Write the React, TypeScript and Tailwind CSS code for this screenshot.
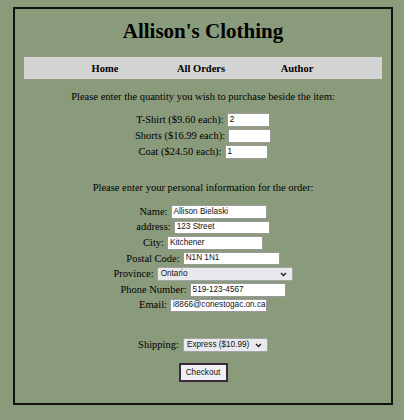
import { ReactNode } from "react";

const serif = { fontFamily: '"Liberation Serif", "Times New Roman", serif' };

function Field({ label, value, w }: { label: string; value: string; w: string }) {
    return (
        <div className="flex h-[15.6px] items-center justify-center gap-[3px]">
            <span className="leading-[12px]">{label}</span>
            <div className={`${w} h-[13.5px] bg-white border border-[#9a9a9a] px-[2px] flex items-center text-[8.2px] text-[#111] font-['Liberation_Sans',Arial,sans-serif] whitespace-nowrap overflow-hidden`}>{value}</div>
        </div>
    )
}

function Select({ value, w }: { value: string; w: string }) {
    return (
        <div className={`${w} h-[13.5px] bg-[#e9e9ed] border border-[#a3a3a8] rounded-[2px] pl-[3px] pr-[5px] flex items-center justify-between text-[8.2px] text-[#111] font-['Liberation_Sans',Arial,sans-serif] whitespace-nowrap`}>
            <span>{value}</span>
            <svg width="7" height="5" viewBox="0 0 7 5"><path d="M1 1 L3.5 3.5 L6 1" fill="none" stroke="#222" strokeWidth="1.4" /></svg>
        </div>
    )
}

function Row({ children }: { children: ReactNode }) {
    return <div className="flex h-[15.6px] items-center justify-center gap-[3px]">{children}</div>
}

export default function App() {
    return (
        <div className="w-[404px] h-[420px] bg-[#8a9b7c] pt-[7px] text-black text-[10.5px]" style={serif}>
            <div className="ml-[13px] w-[380px] h-[398px] border-2 border-[#111] flex flex-col">
                <h1 className="mt-[10px] h-[24px] leading-[24px] text-[21px] font-bold text-center">Allison's Clothing</h1>
                <div className="mt-[14px] mx-[9px] h-[22px] bg-[#d3d3d3] flex justify-center pr-[4px] pt-[1px] font-bold leading-[22px]">
                    <span className="w-[96px] text-center">Home</span>
                    <span className="w-[96px] text-center">All Orders</span>
                    <span className="w-[96px] text-center">Author</span>
                </div>
                <p className="mt-[10px] leading-[16px] text-center">Please enter the quantity you wish to purchase beside the item:</p>
                <div className="mt-[7px] flex flex-col">
                    <div className="flex h-[16px] items-center justify-center gap-[3px]"><span className="leading-[12px]">T-Shirt ($9.60 each):</span><div className="w-[43px] h-[14px] bg-white border border-[#9a9a9a] px-[2px] flex items-center text-[8.2px] font-['Liberation_Sans',Arial,sans-serif]">2</div></div>
                    <div className="flex h-[16px] items-center justify-center gap-[3px]"><span className="leading-[12px]">Shorts ($16.99 each):</span><div className="w-[43px] h-[14px] bg-white border border-[#9a9a9a]"></div></div>
                    <div className="flex h-[16px] items-center justify-center gap-[3px]"><span className="leading-[12px]">Coat ($24.50 each):</span><div className="w-[43px] h-[14px] bg-white border border-[#9a9a9a] px-[2px] flex items-center text-[8.2px] font-['Liberation_Sans',Arial,sans-serif]">1</div></div>
                </div>
                <p className="mt-[20px] leading-[16px] text-center">Please enter your personal information for the order:</p>
                <div className="mt-[8px] flex flex-col">
                    <Field label="Name:" value="Allison Bielaski" w="w-[96px]" />
                    <Field label="address:" value="123 Street" w="w-[96px]" />
                    <Field label="City:" value="Kitchener" w="w-[96px]" />
                    <Field label="Postal Code:" value="N1N 1N1" w="w-[97px]" />
                    <Row><span className="leading-[12px]">Province:</span><Select value="Ontario" w="w-[136px]" /></Row>
                    <Field label="Phone Number:" value="519-123-4567" w="w-[96px]" />
                    <Field label="Email:" value="i8866@conestogac.on.ca" w="w-[97px]" />
                </div>
                <div className="mt-[24px] flex h-[16px] items-center justify-center gap-[4px]">
                    <span className="leading-[12px]">Shipping:</span>
                    <Select value="Express ($10.99)" w="w-[85px]" />
                </div>
                <div className="mt-[10px] flex justify-center">
                    <div className="w-[49px] h-[19px] bg-[#f0f0f5] border-2 border-[#3a2a3c] flex items-center justify-center text-[8.2px] text-[#111] font-['Liberation_Sans',Arial,sans-serif]">Checkout</div>
                </div>
            </div>
        </div>
    )
}
